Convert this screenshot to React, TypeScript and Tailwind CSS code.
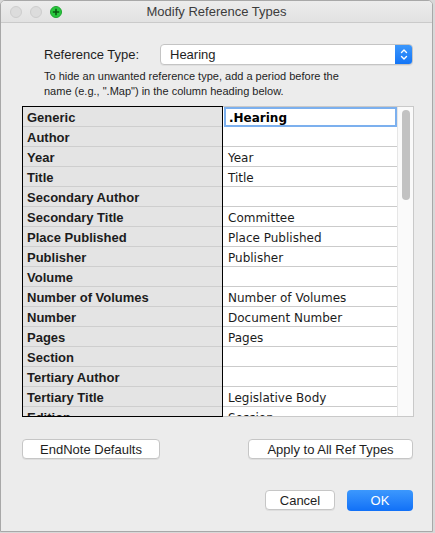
import React from "react";

const rows: [string, string][] = [
  ["Generic", ".Hearing"],
  ["Author", ""],
  ["Year", "Year"],
  ["Title", "Title"],
  ["Secondary Author", ""],
  ["Secondary Title", "Committee"],
  ["Place Published", "Place Published"],
  ["Publisher", "Publisher"],
  ["Volume", ""],
  ["Number of Volumes", "Number of Volumes"],
  ["Number", "Document Number"],
  ["Pages", "Pages"],
  ["Section", ""],
  ["Tertiary Author", ""],
  ["Tertiary Title", "Legislative Body"],
  ["Edition", "Session"],
];

const sans = { fontFamily: '"Liberation Sans", Arial, sans-serif' };

function Button({ label, className }: { label: string; className: string }) {
  return (
    <button
      className={`h-[20px] rounded-[4px] border border-[#c6c6c6] bg-white text-[13px] text-[#1e1e1e] shadow-[0_1px_0_rgba(0,0,0,0.06)] leading-none ${className}`}
    >
      {label}
    </button>
  );
}

export default function App() {
  return (
    <div className="w-[435px] h-[533px] bg-[#d8d8d8] overflow-hidden" style={sans}>
      <div className="w-[433px] h-[532px] flex flex-col rounded-t-[5px] border border-[#a8a8a8] bg-[#ececec] overflow-hidden">
        {/* title bar */}
        <div className="relative h-[22px] shrink-0 flex items-center justify-center border-b border-[#cacaca] bg-gradient-to-b from-[#ececec] to-[#e2e2e2]">
          <div className="absolute left-[9px] top-[5px] flex gap-[8px]">
            <span className="w-[12px] h-[12px] rounded-full bg-[#dcdcdc] border border-[#cdcdcd]" />
            <span className="w-[12px] h-[12px] rounded-full bg-[#dcdcdc] border border-[#cdcdcd]" />
            <span className="w-[12px] h-[12px] rounded-full bg-[#2ac83f] border border-[#1ea52f] flex items-center justify-center">
              <svg width="8" height="8" viewBox="0 0 8 8">
                <path d="M4 0.8V7.2M0.8 4H7.2" stroke="#0a5a12" strokeWidth="1.6" />
              </svg>
            </span>
          </div>
          <span className="text-[13px] text-[#3c3c3c]">Modify Reference Types</span>
        </div>

        {/* reference type selector */}
        <div className="mt-[21px] flex items-center h-[21px]">
          <span className="ml-[43px] w-[116px] text-[13px] text-[#1e1e1e]">Reference Type:</span>
          <div className="flex h-[21px] w-[253px] rounded-[4px] border border-[#c4c4c4] bg-white shadow-[0_1px_0_rgba(0,0,0,0.05)] overflow-hidden">
            <span className="flex-1 pl-[9px] text-[13px] leading-[19px] text-[#1e1e1e]">Hearing</span>
            <span className="w-[17px] bg-gradient-to-b from-[#3b97fc] to-[#1375f6] flex items-center justify-center">
              <svg width="8" height="13" viewBox="0 0 8 13" fill="none" stroke="white" strokeWidth="1.4" strokeLinecap="round" strokeLinejoin="round">
                <path d="M1.5 4.5L4 2L6.5 4.5" />
                <path d="M1.5 8.5L4 11L6.5 8.5" />
              </svg>
            </span>
          </div>
        </div>

        <p className="mt-[4px] ml-[43px] text-[11px] leading-[15px] text-[#1e1e1e]">
          To hide an unwanted reference type, add a period before the
          <br />
          name (e.g., ".Map") in the column heading below.
        </p>

        {/* table */}
        <div className="mt-[7px] ml-[21px] flex h-[311px] w-[392px]">
          <div className="w-[201px] h-full border border-black bg-[#e4e4e4] overflow-hidden">
            {rows.map(([name]) => (
              <div
                key={name}
                className="h-[20px] shrink-0 border-b border-[#cecece] pl-[4px] text-[13px] font-bold leading-[22px] text-[#1c1c1c]"
              >
                {name}
              </div>
            ))}
          </div>
          <div className="flex-1 h-full flex border-t border-r border-b border-[#c9c9c9] bg-white">
            <div className="flex-1 overflow-hidden" style={{ fontFamily: '"DejaVu Sans", Verdana, sans-serif' }}>
              {rows.map(([name, value], i) =>
                i === 0 ? (
                  <div
                    key={name}
                    className="h-[20px] ml-[1px] border-[2px] border-[#7cb0ee] pl-[3px] text-[12px] font-bold leading-[19px] text-black"
                  >
                    {value}
                  </div>
                ) : (
                  <div
                    key={name}
                    className="h-[20px] border-b border-[#cbcbcb] pl-[5px] text-[12px] leading-[23px] text-[#1c1c1c]"
                  >
                    {value}
                  </div>
                )
              )}
            </div>
            <div className="w-[16px] h-full border-l border-[#e6e6e6] bg-[#fafafa] flex justify-center pt-[3px]">
              <div className="w-[8px] h-[90px] rounded-full bg-[#c2c2c2]" />
            </div>
          </div>
        </div>

        {/* action buttons */}
        <div className="mt-[22px] flex justify-between pl-[21px] pr-[19px]">
          <Button label="EndNote Defaults" className="w-[138px]" />
          <Button label="Apply to All Ref Types" className="w-[165px]" />
        </div>

        <div className="mt-[31px] flex justify-end gap-[12px] pr-[19px]">
          <Button label="Cancel" className="w-[70px]" />
          <button className="h-[21px] w-[66px] rounded-[4px] bg-gradient-to-b from-[#3c98fd] to-[#1070f7] text-[13px] text-white leading-none">
            OK
          </button>
        </div>
      </div>
    </div>
  );
}
